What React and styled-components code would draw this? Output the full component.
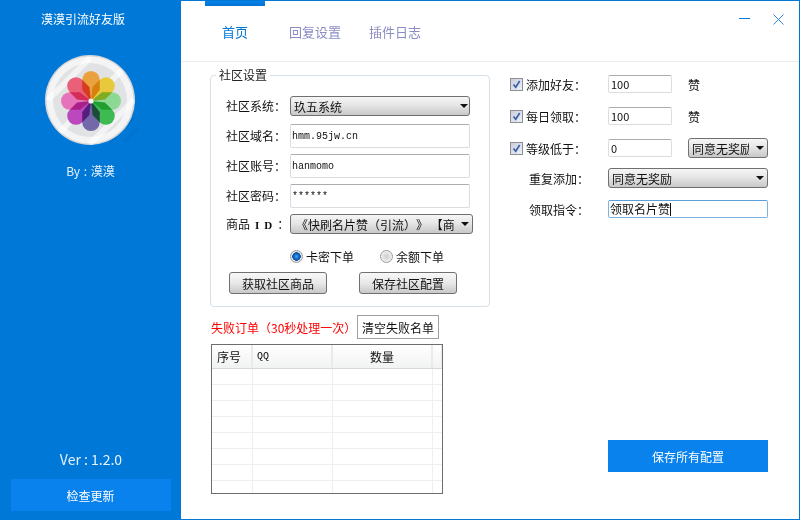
import React from "react";
import styled, { createGlobalStyle } from "styled-components";

const Global = createGlobalStyle`
  html, body { margin: 0; padding: 0; background: #fff; }
  body { font-family: "Noto Sans CJK SC", "Liberation Sans", sans-serif; font-size: 12px; color: #111; text-spacing-trim: space-all; }
  * { box-sizing: border-box; }
`;

const Win = styled.div`display: flex; width: 800px; height: 520px; overflow: hidden; background: #0078d7;`;

const Sidebar = styled.aside`
  width: 181px; height: 520px; display: flex; flex-direction: column; align-items: center;
  padding: 11px 0 9px; color: #fff; background: #0078d7;
`;
const AppTitle = styled.div`font-size: 12px; line-height: 16px; padding-right: 15px;`;
const LogoSvg = styled.svg`display: block; width: 100px; height: 100px; margin: 23px 1px 0 0;`;
const Petals = styled.g`isolation: isolate;`;
const Petal = styled.path`mix-blend-mode: multiply;`;
const Author = styled.div`font-size: 12px; line-height: 16px; margin-top: 13px; color: #e8f2fc; word-spacing: 1px;`;
const Version = styled.div`font-size: 14px; line-height: 16px; margin-top: auto; color: #e8f2fc; padding-left: 1px;`;
const UpdateBtn = styled.div`
  width: 160px; height: 32px; margin-top: 12px; background: #0a82ee; color: #fff;
  display: flex; align-items: center; justify-content: center; font-size: 12px;
`;

const Main = styled.main`
  flex: 1; height: 519px; margin: 1px 1px 0 0; background: #fff; display: flex; flex-direction: column;
  border-bottom: 1px solid #0078d7;
`;
const Header = styled.header`
  height: 61px; flex: none; display: flex; padding-left: 24px; border-bottom: 1px solid #ececec;
`;
const Tab = styled.div`
  width: 60px; margin-right: 20px; text-align: center; font-size: 13px; line-height: 18px;
  color: ${p => (p.$active ? "#0078d7" : "#8a8cc4")};
  &::before {
    content: ""; display: block; height: 5px; margin-bottom: 17px;
    background: ${p => (p.$active ? "linear-gradient(#0a84e8, #0072d2)" : "transparent")};
  }
`;
const Controls = styled.div`margin-left: auto; display: flex; gap: 23px; padding: 13px 15px 0 0; align-items: flex-start;`;
const CtlIcon = styled.svg`display: block; width: 11px; height: 11px;`;

const Body = styled.div`flex: 1; display: flex; padding-left: 29px; min-height: 0;`;
const Left = styled.section`width: 280px; flex: none;`;
const Right = styled.section`width: 258px; margin-left: 20px; padding-top: 13px; display: flex; flex-direction: column;`;

const Group = styled.fieldset`
  margin: 5px 0 0; padding: 13px 0 0 15px; width: 280px; height: 240px; min-width: 0;
  border: 1px solid #d6e0e8; border-radius: 4px; display: flex; flex-direction: column; gap: 6px;
`;
const GroupTitle = styled.legend`
  margin-left: -10px; padding: 0 3px; font-size: 12px; line-height: 16px; color: #222;
`;
const FormRow = styled.div`display: flex; align-items: center; margin-top: ${p => p.$mt || 0}px;`;
const FormLabel = styled.span`width: 64px; flex: none; font-size: 12px; line-height: 16px; white-space: nowrap;`;
const IdText = styled.span`
  font-family: "Liberation Serif", serif; font-weight: bold; font-size: 11px; letter-spacing: 5px; margin-left: 5px;
`;

const Field = styled.input`
  display: block; width: ${p => p.$w || 180}px; height: ${p => p.$h || 24}px; margin: 0; padding: 0 ${p => (p.$mono ? 1 : 2)}px;
  border: 1px solid ${p => (p.$focus ? "#7fb4e2" : "#d8dde2")}; border-top-color: ${p => (p.$focus ? "#5c9fd8" : "#a9acb0")};
  border-radius: 2px; background: #fff; outline: none; color: #111;
  font-family: ${p => (p.$mono ? '"Liberation Mono", monospace' : '"Noto Sans CJK SC", sans-serif')};
  font-size: ${p => (p.$mono ? 10 : 11)}px; line-height: 16px;
`;
const CaretField = styled(Field)`display: flex; align-items: center; font-size: 12px; padding: 0 1px;`;
const Caret = styled.span`display: inline-block; width: 1px; height: 13px; background: #111;`;

const Select = styled.div`
  width: ${p => p.$w || 180}px; height: 20px; flex: none; display: flex; align-items: center;
  padding: 0 ${p => p.$pr ?? 3}px 0 ${p => p.$pl || 3}px; border: 1px solid #707070; border-radius: 3px;
  background: linear-gradient(#f6f6f6 0%, #e6e6e6 45%, #c8c8c8 100%);
  font-size: 12px; color: #111; white-space: nowrap; overflow: hidden;
`;
const SelectText = styled.span`flex: 1; min-width: 0; overflow: hidden;`;
const Arrow = styled.i`
  flex: none; margin-left: 7px; width: 0; height: 0;
  border-left: 4px solid transparent; border-right: 4px solid transparent; border-top: 4px solid #111;
`;

const RadioRow = styled.div`display: flex; align-items: center; height: 16px; padding-left: 64px; gap: 26px; margin-top: 8px;`;
const RadioItem = styled.label`display: flex; align-items: center; gap: 3px; font-size: 12px;`;
const Radio = styled.span`
  width: 13px; height: 13px; border-radius: 50%; border: 1px solid #9a9a9a;
  background: ${p => (p.$on
    ? "radial-gradient(circle, #4aa3ee 0, #0a5fc0 3px, #0a4f9f 4px, #e6e6e6 4.5px)"
    : "radial-gradient(circle, #cfcfcf 0, #e6e6e6 4px, #f7f7f7 6px)")};
`;
const ButtonRow = styled.div`display: flex; gap: 32px; margin: 2px 0 0 3px;`;
const NativeBtn = styled.div`
  width: 98px; height: 22px; display: flex; align-items: center; justify-content: center; font-size: 12px;
  border: 1px solid #707070; border-radius: 3px; background: linear-gradient(#f8f8f8 0%, #e8e8e8 50%, #c8c8c8 100%);
`;

const FailRow = styled.div`display: flex; align-items: center; margin: 8px 0 0 1px; height: 24px;`;
const FailText = styled.span`width: 146px; color: #f00; font-size: 12px; white-space: nowrap;`;
const ClearBtn = styled.div`
  width: 82px; height: 24px; border: 1px solid #a0a0a0; background: #fff; font-size: 12px;
  display: flex; align-items: center; justify-content: center;
`;

const Table = styled.div`width: 232px; height: 150px; margin: 5px 0 0 1px; border: 1px solid #6d6d6d; overflow: hidden;`;
const HeadRow = styled.div`
  display: grid; grid-template-columns: 41px 80px 100px 10px; height: 24px;
  background: linear-gradient(#fff 0%, #fbfbfb 30%, #f1f2f3 100%); border-bottom: 1px solid #d8d8d8;
`;
const HeadCell = styled.div`
  display: flex; align-items: center; padding-left: ${p => p.$pl || 0}px; border-right: 2px solid #eaeaea;
  justify-content: ${p => (p.$center ? "center" : "flex-start")}; font-size: 12px;
  font-family: ${p => (p.$mono ? '"Liberation Mono", monospace' : "inherit")};
  ${p => (p.$mono ? "font-size: 10px;" : "")}
`;
const DataRow = styled.div`
  display: grid; grid-template-columns: 41px 80px 100px 10px; height: 16px; border-bottom: 1px solid #efefef;
`;
const DataCell = styled.div`border-right: 1px solid #efefef;`;

const OptRow = styled.div`display: flex; align-items: center; height: 18px; margin-bottom: 14px;`;
const Check = styled.span`
  width: 13px; height: 13px; flex: none; border: 1px solid #8e8f8f; margin-right: 3px; display: flex;
  background: linear-gradient(135deg, #c8cede, #eef0f8);
`;
const CheckSvg = styled.svg`display: block; width: 11px; height: 11px;`;
const OptLabel = styled.span`width: 82px; flex: none; font-size: 12px;`;
const Unit = styled.span`margin-left: 16px; font-size: 12px;`;
const SelectSlot = styled.div`margin-left: 16px;`;
const PlainRow = styled.div`
  display: flex; align-items: center; padding-left: 19px; margin-top: ${p => p.$mt}px;
`;
const PlainLabel = styled.span`width: 79px; flex: none; font-size: 12px;`;
const SaveBtn = styled.div`
  width: 160px; height: 32px; margin: auto 0 47px 98px; background: #0a82ee; color: #fff;
  display: flex; align-items: center; justify-content: center; font-size: 12px;
`;

const PETAL = "M0 0 L-8.75 -11 V-21.25 A8.75 8.75 0 0 1 8.75 -21.25 V-11 Z";
const COLORS = ["#eaa23e", "#e9c93c", "#8cd994", "#3dba52", "#7268aa", "#bb48bc", "#e673b9", "#ea6078"];

function Logo() {
  return (
    <LogoSvg viewBox="0 0 100 100" aria-label="logo">
      <defs>
        <clipPath id="disc"><circle cx="50" cy="50" r="45" /></clipPath>
      </defs>
      <g stroke="#0066bb" strokeOpacity=".35" strokeWidth="3">
        <path d="M6 36 L30 12 M2 60 L14 48 M70 92 L94 68 M84 92 L98 78" />
      </g>
      <circle cx="50" cy="50" r="45" fill="#d5d6d8" />
      <circle cx="50" cy="50" r="43.5" fill="#f4f4f5" />
      <circle cx="50" cy="50" r="37" fill="#e1e2e4" />
      <g clipPath="url(#disc)" stroke="#fff" strokeOpacity=".6" strokeWidth="6">
        <path d="M8 50 L50 8 M20 82 L82 20 M50 94 L94 50" />
      </g>
      <Petals>
        {COLORS.map((c, i) => (
          <Petal key={c} d={PETAL} fill={c} transform={`translate(51 51) rotate(${i * 45})`} />
        ))}
      </Petals>
      <circle cx="51" cy="51" r="2.6" fill="#f4f4f4" />
    </LogoSvg>
  );
}

const Tick = () => (
  <CheckSvg viewBox="0 0 11 11">
    <path d="M2.5 5.5 L4.7 8.2 L8.7 2" fill="none" stroke="#3f5fa8" strokeWidth="1.7" />
  </CheckSvg>
);

export default function App() {
  return (
    <>
      <Global />
      <Win>
        <Sidebar>
          <AppTitle>漠漠引流好友版</AppTitle>
          <Logo />
          <Author>By : 漠漠</Author>
          <Version>Ver : 1.2.0</Version>
          <UpdateBtn>检查更新</UpdateBtn>
        </Sidebar>
        <Main>
          <Header>
            <Tab $active>首页</Tab>
            <Tab>回复设置</Tab>
            <Tab>插件日志</Tab>
            <Controls>
              <CtlIcon viewBox="0 0 11 11"><path d="M0 4.5 H11" stroke="#0078d7" strokeWidth="1" /></CtlIcon>
              <CtlIcon viewBox="0 0 11 11"><path d="M.5 .5 L10.5 10.5 M10.5 .5 L.5 10.5" stroke="#2f86e0" strokeWidth="1" /></CtlIcon>
            </Controls>
          </Header>
          <Body>
            <Left>
              <Group>
                <GroupTitle>社区设置</GroupTitle>
                <FormRow>
                  <FormLabel>社区系统：</FormLabel>
                  <Select $pr={1}><SelectText>玖五系统</SelectText><Arrow /></Select>
                </FormRow>
                <FormRow $mt={2}>
                  <FormLabel>社区域名：</FormLabel>
                  <Field readOnly $mono value="hmm.95jw.cn" />
                </FormRow>
                <FormRow>
                  <FormLabel>社区账号：</FormLabel>
                  <Field readOnly $mono value="hanmomo" />
                </FormRow>
                <FormRow>
                  <FormLabel>社区密码：</FormLabel>
                  <Field readOnly $mono value="******" />
                </FormRow>
                <FormRow>
                  <FormLabel>商品<IdText>ID</IdText>：</FormLabel>
                  <Select $w={183} $pl={5}><SelectText>《快刷名片赞（引流）》 【商品</SelectText><Arrow /></Select>
                </FormRow>
                <RadioRow>
                  <RadioItem><Radio $on />卡密下单</RadioItem>
                  <RadioItem><Radio />余额下单</RadioItem>
                </RadioRow>
                <ButtonRow>
                  <NativeBtn>获取社区商品</NativeBtn>
                  <NativeBtn>保存社区配置</NativeBtn>
                </ButtonRow>
              </Group>
              <FailRow>
                <FailText>失败订单（30秒处理一次）</FailText>
                <ClearBtn>清空失败名单</ClearBtn>
              </FailRow>
              <Table>
                <HeadRow>
                  <HeadCell $pl={5}>序号</HeadCell>
                  <HeadCell $pl={4} $mono>QQ</HeadCell>
                  <HeadCell $center>数量</HeadCell>
                  <HeadCell />
                </HeadRow>
                {Array.from({ length: 8 }, (_, r) => (
                  <DataRow key={r}>
                    <DataCell /><DataCell /><DataCell /><DataCell />
                  </DataRow>
                ))}
              </Table>
            </Left>
            <Right>
              <OptRow>
                <Check><Tick /></Check>
                <OptLabel>添加好友：</OptLabel>
                <Field readOnly $w={64} $h={18} value="100" />
                <Unit>赞</Unit>
              </OptRow>
              <OptRow>
                <Check><Tick /></Check>
                <OptLabel>每日领取：</OptLabel>
                <Field readOnly $w={64} $h={18} value="100" />
                <Unit>赞</Unit>
              </OptRow>
              <OptRow>
                <Check><Tick /></Check>
                <OptLabel>等级低于：</OptLabel>
                <Field readOnly $w={64} $h={18} value="0" />
                <SelectSlot>
                  <Select $w={80} $pl={3}><SelectText>同意无奖励</SelectText><Arrow /></Select>
                </SelectSlot>
              </OptRow>
              <PlainRow $mt={-3}>
                <PlainLabel>重复添加：</PlainLabel>
                <Select $w={160} $pl={3}><SelectText>同意无奖励</SelectText><Arrow /></Select>
              </PlainRow>
              <PlainRow $mt={12}>
                <PlainLabel>领取指令：</PlainLabel>
                <CaretField as="div" $w={160} $h={18} $focus>领取名片赞<Caret /></CaretField>
              </PlainRow>
              <SaveBtn>保存所有配置</SaveBtn>
            </Right>
          </Body>
        </Main>
      </Win>
    </>
  );
}
